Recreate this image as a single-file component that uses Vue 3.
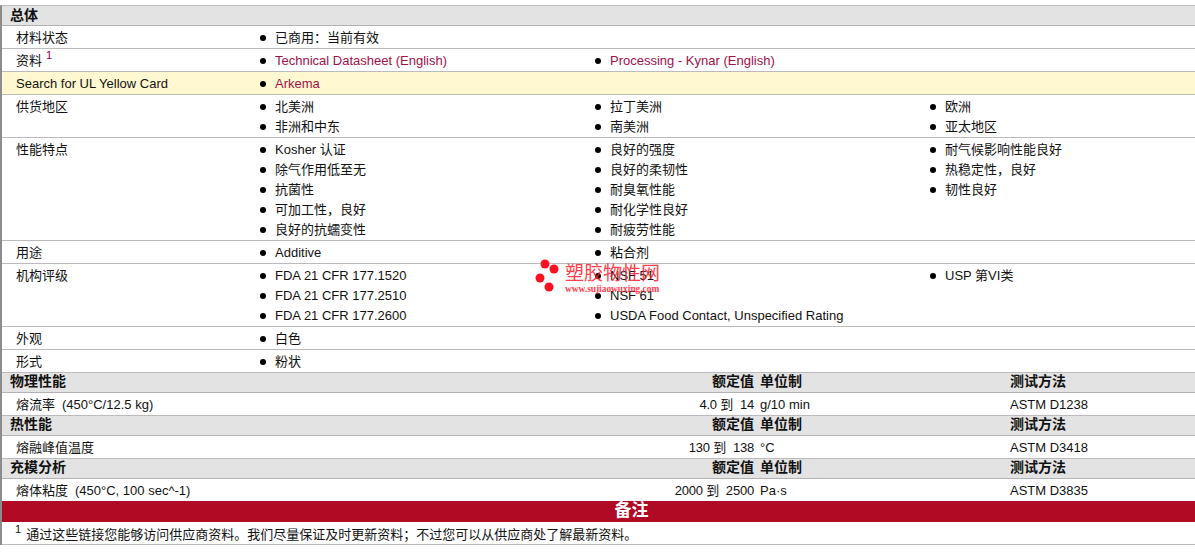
<script setup>
const genRows = [
  { label: '材料状态', cols: [[{ t: '已商用：当前有效' }]] },
  { label: '资料', sup: '1', cols: [[{ t: 'Technical Datasheet (English)', link: true }], [{ t: 'Processing - Kynar (English)', link: true }]] },
  { label: 'Search for UL Yellow Card', hl: true, cols: [[{ t: 'Arkema', link: true }]] },
  { label: '供货地区', cols: [[{ t: '北美洲' }, { t: '非洲和中东' }], [{ t: '拉丁美洲' }, { t: '南美洲' }], [{ t: '欧洲' }, { t: '亚太地区' }]] },
  { label: '性能特点', cols: [
    ['Kosher 认证', '除气作用低至无', '抗菌性', '可加工性，良好', '良好的抗蠕变性'].map(t => ({ t })),
    ['良好的强度', '良好的柔韧性', '耐臭氧性能', '耐化学性良好', '耐疲劳性能'].map(t => ({ t })),
    ['耐气候影响性能良好', '热稳定性，良好', '韧性良好'].map(t => ({ t }))
  ] },
  { label: '用途', cols: [[{ t: 'Additive' }], [{ t: '粘合剂' }]] },
  { label: '机构评级', cols: [
    ['FDA 21 CFR 177.1520', 'FDA 21 CFR 177.2510', 'FDA 21 CFR 177.2600'].map(t => ({ t })),
    ['NSF 51', 'NSF 61', 'USDA Food Contact, Unspecified Rating'].map(t => ({ t })),
    [{ t: 'USP 第VI类' }]
  ] },
  { label: '外观', cols: [[{ t: '白色' }]] },
  { label: '形式', cols: [[{ t: '粉状' }]] }
]
const sections = [
  { title: '物理性能', name: '熔流率', cond: '(450°C/12.5 kg)', low: '4.0', high: '14', unit: 'g/10 min', test: 'ASTM D1238' },
  { title: '热性能', name: '熔融峰值温度', cond: '', low: '130', high: '138', unit: '°C', test: 'ASTM D3418' },
  { title: '充模分析', name: '熔体粘度', cond: '(450°C, 100 sec^-1)', low: '2000', high: '2500', unit: 'Pa·s', test: 'ASTM D3835' }
]
</script>

<template>
  <div class="page">
    <div class="head">总体</div>
    <div v-for="r in genRows" :key="r.label" class="row" :class="{ hl: r.hl }">
      <div class="label">{{ r.label }}<sup v-if="r.sup" class="sup link-sup">{{ r.sup }}</sup></div>
      <ul v-for="(c, i) in r.cols" :key="i" class="col">
        <li v-for="it in c" :key="it.t" :class="{ link: it.link }">{{ it.t }}</li>
      </ul>
    </div>
    <template v-for="s in sections" :key="s.title">
      <div class="head datarow">
        <span class="name">{{ s.title }}</span>
        <span class="val">额定值</span>
        <span class="unit">单位制</span>
        <span class="test">测试方法</span>
      </div>
      <div class="row datarow body">
        <span class="name">{{ s.name }}<span v-if="s.cond" class="cond">{{ s.cond }}</span></span>
        <span class="val num">{{ s.low }} 到&nbsp;&nbsp;{{ s.high }}</span>
        <span class="unit">{{ s.unit }}</span>
        <span class="test">{{ s.test }}</span>
      </div>
    </template>
    <div class="redbar">备注</div>
    <div class="note"><sup class="sup first">1</sup>通过这些链接您能够访问供应商资料。我们尽量保证及时更新资料；不过您可以从供应商处了解最新资料。</div>

    <div class="mark">
      <svg class="dots" width="26" height="34" viewBox="0 0 26 34">
        <circle cx="10" cy="5" r="4.5" />
        <circle cx="19" cy="10" r="4.5" />
        <circle cx="5" cy="19" r="4.5" />
        <circle cx="14" cy="28" r="4.5" />
      </svg>
      <div class="marktext">
        <div class="cn">塑胶物性网</div>
        <div class="url">www.sujiaowuxing.com</div>
      </div>
    </div>
  </div>
</template>

<style scoped>
.page {
  position: relative;
  box-sizing: border-box;
  width: 1195px;
  margin-top: 5px;
  border-left: 2px solid #8c8c8c;
  border-top: 1px solid #bdbdbd;
  font: 13px/20px "Liberation Sans", "Noto Sans CJK SC", sans-serif;
  color: #111;
}
.head {
  box-sizing: border-box;
  height: 20px;
  padding-left: 8px;
  background: #e3e3e3;
  border-bottom: 1px solid #b5b2b5;
  font-weight: bold;
  font-size: 14px;
  line-height: 18px;
}
.head.datarow { line-height: 16px; }
.row {
  display: grid;
  grid-template-columns: 258px 335px 335px 1fr;
  padding: 2px 0 0;
  background: #fff;
  border-bottom: 1px solid #bdbabd;
}
.row.hl { background: #fff8d0; }
.label { padding-left: 14px; }
.sup { font-size: 11px; line-height: 0; position: relative; top: -1px; margin-left: 4px; vertical-align: super; }
.link-sup { color: #800060; }
.sup.first { margin: 0 5px 0 13px; color: #111; }
.col { list-style: none; margin: 0; padding: 0; }
.col li { padding-left: 15px; position: relative; white-space: nowrap; }
.col li::before {
  content: "";
  position: absolute;
  left: 0;
  top: 7px;
  width: 6px;
  height: 6px;
  border-radius: 50%;
  background: #000;
}
.link { color: #a0104a; }
.head.datarow, .row.datarow { display: flex; padding-left: 0; }
.name { width: 0; flex: none; margin-left: 8px; white-space: nowrap; }
.body .name { margin-left: 14px; }
.val { width: 744px; flex: none; text-align: right; white-space: nowrap; }
.body .val { width: 738px; }
.num { letter-spacing: -0.2px; }
.unit { width: 250px; flex: none; margin-left: 6px; white-space: nowrap; }
.test { flex: 1; min-width: 0; }
.cond { margin-left: 7px; }
.redbar {
  height: 21px;
  margin-top: -1px;
  padding-left: 66px;
  background: #b00a24;
  color: #fff;
  font-weight: bold;
  font-size: 17px;
  line-height: 19px;
  text-align: center;
}
.note {
  box-sizing: border-box;
  height: 23px;
  padding-top: 3px;
  background: #fff;
  border-bottom: 1px solid #bdbabd;
}
.mark {
  position: absolute;
  left: 533px;
  top: 253px;
  display: flex;
  gap: 4px;
  pointer-events: none;
}
.dots { fill: #ff1020; flex: none; }
.marktext { color: #ff2030; opacity: 0.85; padding-top: 3px; }
.cn { font-size: 19px; line-height: 23px; }
.url { font: bold 9.4px/11px "Liberation Serif", serif; margin-top: -1px; white-space: nowrap; }
</style>
